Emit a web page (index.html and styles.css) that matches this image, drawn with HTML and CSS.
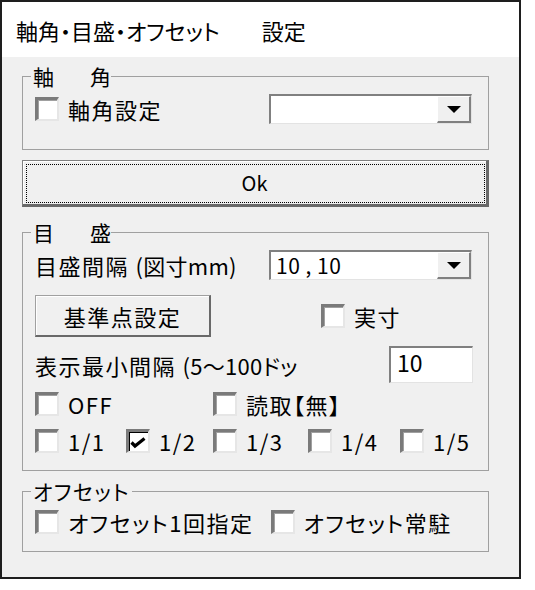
FILE: index.html
```html
<!DOCTYPE html>
<html lang="ja">
<head>
<meta charset="utf-8">
<title>軸角・目盛・オフセット 設定</title>
<link rel="stylesheet" href="styles.css">
</head>
<body>
<div class="window">
  <div class="titlebar"><span>軸角・目盛・オフセット</span><span class="title-tail">設定</span></div>
  <div class="panel">
    <div class="group g1">
      <div class="legend">軸　　角</div>
      <div class="row r1">
        <label class="check"><span class="box"></span><span class="lbl l-jikaku">軸角設定</span></label>
        <div class="combo">
          <span class="field"></span>
          <span class="drop"><svg width="14" height="7" viewBox="0 0 14 7"><polygon points="0,0 14,0 7,7" fill="#000"/></svg></span>
        </div>
      </div>
    </div>

    <button class="ok" type="button">Ok</button>

    <div class="group g2">
      <div class="legend">目　　盛</div>
      <div class="row ra">
        <span class="lbl">目盛間隔 <span class="tight">(図寸mm)</span></span>
        <div class="combo">
          <span class="field">10 , 10</span>
          <span class="drop"><svg width="14" height="7" viewBox="0 0 14 7"><polygon points="0,0 14,0 7,7" fill="#000"/></svg></span>
        </div>
      </div>
      <div class="row rb">
        <button class="btn" type="button">基準点設定</button>
        <label class="check jisun"><span class="box"></span><span class="lbl">実寸</span></label>
      </div>
      <div class="row rc">
        <span class="lbl">表示最小間隔 <span class="tight">(5〜100ドッ</span></span>
        <span class="input">10</span>
      </div>
      <div class="grid rd">
        <label class="check"><span class="box"></span><span class="lbl">OFF</span></label>
        <label class="check yomi"><span class="box"></span><span class="lbl">読取【無】</span></label>
      </div>
      <div class="grid re">
        <label class="check"><span class="box"></span><span class="lbl">1/1</span></label>
        <label class="check"><span class="box on"><svg width="19" height="19" viewBox="0 0 19 19"><polyline points="2.5,10.5 6,14 15.5,6.5" fill="none" stroke="#000" stroke-width="3.2"/></svg></span><span class="lbl">1/2</span></label>
        <label class="check"><span class="box"></span><span class="lbl">1/3</span></label>
        <label class="check"><span class="box"></span><span class="lbl">1/4</span></label>
        <label class="check"><span class="box"></span><span class="lbl">1/5</span></label>
      </div>
    </div>

    <div class="group g3">
      <div class="legend">オフセット</div>
      <div class="row r3">
        <label class="check"><span class="box"></span><span class="lbl">オフセット1回指定</span></label>
        <label class="check jochu"><span class="box"></span><span class="lbl">オフセット常駐</span></label>
      </div>
    </div>
  </div>
</div>
</body>
</html>
```

FILE: styles.css
```css
* { box-sizing: border-box; }

html, body {
  margin: 0;
  padding: 0;
  background: #ffffff;
}

body {
  font-family: "Noto Sans CJK JP", "Noto Sans", sans-serif;
  font-feature-settings: "palt";
  color: #000;
}

.window {
  width: 521px;
  height: 579px;
  border: 2px solid #1e1e1e;
  background: #f0f0f0;
  display: flex;
  flex-direction: column;
}

.titlebar {
  flex: none;
  height: 55px;
  background: #ffffff;
  display: flex;
  align-items: center;
  padding-left: 14px;
  font-size: 22px;
  line-height: 26px;
}

.title-tail {
  margin-left: 42px;
}

.panel {
  display: flex;
  flex-direction: column;
  padding: 0 30px 0 20px;
}

.group {
  border: 1px solid #a0a0a0;
  padding: 0 16px 0 12px;
}

.legend {
  width: max-content;
  height: 22px;
  margin: -12px 0 0 -4px;
  padding: 0 2px;
  background: #f0f0f0;
  font-size: 21px;
  line-height: 22px;
  letter-spacing: -2px;
}

.g3 .legend {
  letter-spacing: 1.5px;
}

.row {
  display: flex;
  align-items: center;
}

.grid {
  display: grid;
  grid-template-columns: 91px 87px 95px 92px 1fr;
  align-items: center;
}

.g1 { margin-top: 19px; padding-bottom: 25px; }
.r1 { margin-top: 7px; }

.lbl {
  font-size: 22px;
  line-height: 24px;
  letter-spacing: 1.5px;
  white-space: nowrap;
}

.tight {
  letter-spacing: 0.3px;
}

.check {
  display: flex;
  align-items: center;
}

.check .lbl {
  margin-left: 9px;
}

.box {
  flex: none;
  width: 24px;
  height: 24px;
  background: #ffffff;
  border-style: solid;
  border-width: 3px 2px 2px 3px;
  border-color: #7a7a7a #e6e6e6 #e6e6e6 #7a7a7a;
  box-shadow: inset 1px 1px #a0a0a0;
  display: flex;
}

.box.on {
  box-shadow: inset 1px 1px #000;
}

.combo {
  margin-left: auto;
  width: 203px;
  height: 30px;
  display: flex;
  background: #ffffff;
  border-style: solid;
  border-width: 2px 1px 1px 2px;
  border-color: #808080 #e3e3e3 #e3e3e3 #808080;
}

.field {
  flex: 1;
  padding-left: 5px;
  font-size: 21px;
  line-height: 27px;
  letter-spacing: 0.5px;
}

.drop {
  flex: none;
  width: 34px;
  background: #f0f0f0;
  border-style: solid;
  border-width: 1px 2px 2px 1px;
  border-color: #ffffff #808080 #808080 #ffffff;
  display: flex;
  align-items: center;
  justify-content: center;
}

.ok {
  margin: 10px 0 0 0;
  width: 100%;
  height: 47px;
  padding: 0;
  background: #f0f0f0;
  font-family: inherit;
  font-size: 20px;
  color: #000;
  border-style: solid;
  border-width: 1px 3px 3px 1px;
  border-color: #808080 #6a6a6a #6a6a6a #808080;
  box-shadow: inset 1px 1px #ffffff;
  outline: 1px dotted #000;
  outline-offset: -5px;
}

.g2 { margin-top: 25px; padding-bottom: 17px; }
.ra { margin-top: 7px; }
.rb { margin-top: 15px; }
.rc { margin-top: 9px; }
.rd { margin-top: 9px; }
.re { margin-top: 13px; }

.btn {
  width: 176px;
  height: 42px;
  padding: 0;
  background: #f0f0f0;
  font-family: inherit;
  font-size: 22px;
  letter-spacing: 1.5px;
  color: #000;
  border-style: solid;
  border-width: 1px 2px 2px 1px;
  border-color: #a0a0a0 #696969 #696969 #a0a0a0;
  box-shadow: inset 1px 1px #ffffff;
}

.jisun { margin-left: 110px; }

.input {
  margin-left: auto;
  margin-right: -1px;
  width: 84px;
  height: 37px;
  background: #ffffff;
  border-style: solid;
  border-width: 2px 1px 1px 2px;
  border-color: #808080 #e3e3e3 #e3e3e3 #808080;
  padding-left: 6px;
  font-size: 23px;
  line-height: 28px;
}

.yomi { grid-column: 3 / span 3; }

.g3 { margin-top: 20px; padding-bottom: 17px; }
.r3 { margin-top: 8px; }
.jochu { margin-left: 17px; }
```
